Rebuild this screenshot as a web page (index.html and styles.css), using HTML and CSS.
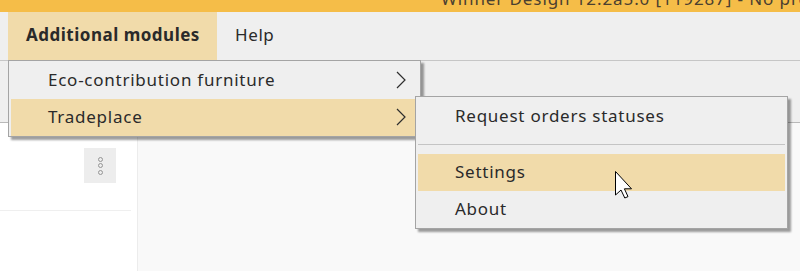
FILE: index.html
```html
<!DOCTYPE html>
<html lang="en">
<head>
    <meta charset="UTF-8">
    <title>Winner Design</title>
    <link rel="stylesheet" href="styles.css">
</head>
<body>
    <div class="app">
        <div class="titlebar">
            <span class="title">Winner Design 12.2a5.0 [119287] - No project</span>
        </div>

        <!-- Main menu bar -->
        <div class="menubar">
            <div class="menubar-item active">Additional modules</div>
            <div class="menubar-item">Help</div>
        </div>

        <div class="toolbar"></div>

        <div class="workspace">
            <div class="sidepanel">
                <div class="sidepanel-head">
                    <button class="kebab" type="button">
                        <span class="dot"></span>
                        <span class="dot"></span>
                        <span class="dot"></span>
                    </button>
                </div>
            </div>
            <div class="content"></div>
        </div>

        <!-- Dropdown of "Additional modules" -->
        <div class="menu menu-modules">
            <div class="menu-item">
                <span class="label">Eco-contribution furniture</span>
                <svg class="chevron" width="10" height="18" viewBox="0 0 10 18"><polyline points="1,1 9,9 1,17" fill="none" stroke="#2e2e2e" stroke-width="1.2"/></svg>
            </div>
            <div class="menu-item hover">
                <span class="label">Tradeplace</span>
                <svg class="chevron" width="10" height="18" viewBox="0 0 10 18"><polyline points="1,1 9,9 1,17" fill="none" stroke="#2e2e2e" stroke-width="1.2"/></svg>
            </div>
        </div>

        <!-- Tradeplace submenu -->
        <div class="menu menu-tradeplace">
            <div class="menu-item"><span class="label">Request orders statuses</span></div>
            <div class="menu-separator"></div>
            <div class="menu-item hover"><span class="label">Settings</span></div>
            <div class="menu-item"><span class="label">About</span></div>
        </div>

        <svg class="cursor" width="20" height="30" viewBox="0 0 20 30">
            <path d="M1.5 1.5 L1.5 25 L7 20 L10.8 28 L14 26.6 L10.4 18.8 L17.5 18.8 Z" fill="#fff" stroke="#000" stroke-width="1" stroke-linejoin="miter"/>
        </svg>
    </div>
</body>
</html>
```

FILE: styles.css
```css
* {
    box-sizing: border-box;
}
body {
    margin: 0;
    font-family: "Noto Sans", "Open Sans", sans-serif;
    color: #2a2a2a;
    background-color: #f9f9f9;
}
.app {
    position: relative;
    width: 800px;
    height: 271px;
    overflow: hidden;
    display: flex;
    flex-direction: column;
}
.titlebar {
    height: 12px;
    flex: none;
    background-color: #f5bd48;
    overflow: hidden;
    padding-left: 441px;
}
.title {
    display: block;
    margin-top: -12px;
    font-size: 17px;
    line-height: 22px;
    letter-spacing: 0.9px;
    color: #4a4030;
    white-space: nowrap;
}
.menubar {
    height: 49px;
    flex: none;
    display: flex;
    padding-left: 8px;
    background-color: #efefef;
    border-bottom: 1px solid #c6c6c6;
}
.menubar-item {
    display: flex;
    align-items: center;
    padding: 0 18px 3px 18px;
    font-size: 17px;
    letter-spacing: 0.6px;
    white-space: nowrap;
    height: 48px;
}
.menubar-item.active {
    background-color: #f1dbaa;
    font-weight: bold;
    letter-spacing: 0.5px;
    width: 209px;
    padding-right: 0;
}
.toolbar {
    height: 62px;
    flex: none;
    background-color: #efefef;
    border-bottom: 1px solid #b9b9b9;
}
.workspace {
    flex: 1;
    display: flex;
}
.sidepanel {
    width: 138px;
    background-color: #ffffff;
    border-right: 1px solid #ececec;
}
.sidepanel-head {
    height: 88px;
    margin-right: 6px;
    border-bottom: 1px solid #efefef;
    padding: 25px 0 0 84px;
}
.kebab {
    width: 32px;
    height: 35px;
    border: none;
    background-color: #ededed;
    display: flex;
    flex-direction: column;
    align-items: center;
    justify-content: center;
    gap: 1.5px;
    padding: 0;
}
.dot {
    width: 5px;
    height: 5px;
    border-radius: 50%;
    border: 1.5px solid #959595;
}
.content {
    flex: 1;
    background-color: #f9f9f9;
}
.menu {
    position: absolute;
    background-color: #efefef;
    border: 1px solid #a4a4a4;
    padding: 1px 2px 0 2px;
    box-shadow: 3px 3px 2px rgba(0, 0, 0, 0.38);
}
.menu-modules {
    left: 8px;
    top: 60px;
    width: 413px;
}
.menu-tradeplace {
    left: 415px;
    top: 96px;
    width: 373px;
}
.menu-item {
    height: 37px;
    display: flex;
    align-items: center;
    justify-content: space-between;
    padding: 0 12px 2px 37px;
    font-size: 17px;
    letter-spacing: 0.75px;
}
.menu-item.hover {
    background-color: #f1dbaa;
}
.chevron {
    display: block;
}
.menu-separator {
    height: 19px;
    padding-top: 9px;
}
.menu-separator::after {
    content: "";
    display: block;
    height: 1px;
    background-color: #c4c4c4;
}
.cursor {
    position: absolute;
    left: 614px;
    top: 170px;
}
```
